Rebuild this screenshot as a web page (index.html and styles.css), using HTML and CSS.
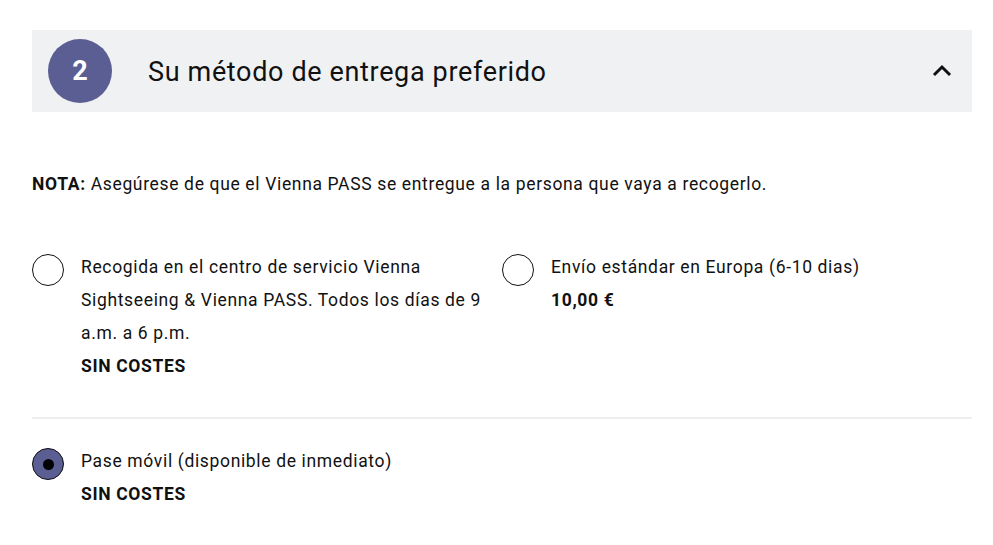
FILE: index.html
```html
<!DOCTYPE html>
<html lang="es">
<head>
    <meta charset="UTF-8">
    <meta name="viewport" content="width=device-width, initial-scale=1.0">
    <title>Método de entrega</title>
<link rel="stylesheet" href="styles.css">
</head>
<body>
<div class="container">
    <div class="step-head">
        <span class="step-num">2</span>
        <h2 class="step-title">Su método de entrega preferido</h2>
        <svg class="chevron" width="20" height="14" viewBox="0 0 20 14">
            <path d="M2 11 L10 3 L18 11" fill="none" stroke="#111" stroke-width="3"/>
        </svg>
    </div>

    <p class="note"><b>NOTA:</b> Asegúrese de que el Vienna PASS se entregue a la persona que vaya a recogerlo.</p>

    <div class="options">
        <label class="option">
            <span class="radio"></span>
            <span class="option-text">
                Recogida en el centro de servicio Vienna Sightseeing &amp; Vienna PASS. Todos los días de 9 a.m. a 6 p.m.
                <b>SIN COSTES</b>
            </span>
        </label>
        <label class="option">
            <span class="radio"></span>
            <span class="option-text">
                Envío estándar en Europa (6-10 dias)
                <b>10,00 €</b>
            </span>
        </label>
    </div>

    <hr class="divider">

    <div class="options">
        <label class="option">
            <span class="radio checked"></span>
            <span class="option-text">
                Pase móvil (disponible de inmediato)
                <b>SIN COSTES</b>
            </span>
        </label>
    </div>
</div>
</body>
</html>
```

FILE: styles.css
```css
*{box-sizing: border-box;}
body{
    margin: 0;
    background: #fff;
    color: #111;
    font-family: "Roboto", "Liberation Sans", sans-serif;
}
.container{
    width: 940px;
    margin-left: 32px;
    padding-top: 30px;
}
.step-head{
    display: flex;
    align-items: center;
    height: 82px;
    background-color: #f0f1f3;
    padding: 0 20px 0 16px;
}
.step-num{
    width: 64px;
    height: 64px;
    border-radius: 50%;
    background-color: #5b5e93;
    color: #fff;
    font-weight: bold;
    font-size: 27px;
    display: flex;
    align-items: center;
    justify-content: center;
}
.step-title{
    flex: 1;
    margin: 2px 0 0 36px;
    font-weight: normal;
    font-size: 27px;
    letter-spacing: 0.65px;
}
.note{
    margin: 60px 0 0;
    font-size: 17.5px;
    letter-spacing: 0.65px;
    line-height: 24px;
}
.options{
    display: grid;
    grid-template-columns: 470px 470px;
    margin-top: 56px;
}
.option{
    display: flex;
    align-items: flex-start;
    gap: 17px;
}
.radio{
    flex: none;
    width: 32px;
    height: 32px;
    border: 1px solid #111;
    border-radius: 50%;
    margin-top: 2px;
    display: flex;
    align-items: center;
    justify-content: center;
}
.radio.checked{
    background-color: #5b5e93;
}
.radio.checked::after{
    content: "";
    width: 11px;
    height: 11px;
    border-radius: 50%;
    background: #000;
}
.option-text{
    font-size: 17.5px;
    letter-spacing: 0.65px;
    line-height: 33px;
    width: 405px;
    margin-top: -1px;
}
.option-text b{
    display: block;
}
.divider{
    border: 0;
    border-top: 2px solid #eeeeee;
    margin: 34px 0 0;
}
.divider + .options{
    margin-top: 27px;
}
```
